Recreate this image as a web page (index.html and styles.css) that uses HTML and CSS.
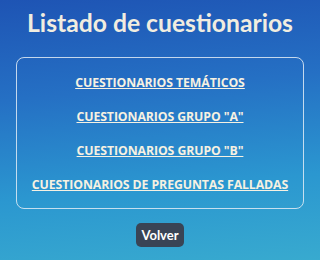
FILE: index.html
```html
<!DOCTYPE html>
<html lang="es">
<head>
<meta charset="utf-8">
<title>Listado de cuestionarios</title>
<link rel="stylesheet" href="styles.css">
</head>
<body>
<main class="page">
  <h1 class="title">Listado de cuestionarios</h1>
  <nav class="card">
    <a class="link" href="#">CUESTIONARIOS TEMÁTICOS</a>
    <a class="link" href="#">CUESTIONARIOS GRUPO "A"</a>
    <a class="link" href="#">CUESTIONARIOS GRUPO "B"</a>
    <a class="link" href="#">CUESTIONARIOS DE PREGUNTAS FALLADAS</a>
  </nav>
  <button class="back" type="button">Volver</button>
</main>
</body>
</html>
```

FILE: styles.css
```css
html, body {
  margin: 0;
  height: 100%;
}
body {
  background: linear-gradient(175deg, #1e54b4 0%, #2570c4 35%, #2b97d0 70%, #38aacf 100%);
  font-family: "Open Sans", "Noto Sans", sans-serif;
  color: #f3efe2;
}
.page {
  display: flex;
  flex-direction: column;
  align-items: center;
  padding-top: 8px;
}
.title {
  margin: 0;
  font-family: Lato, "Open Sans", sans-serif;
  font-size: 24.7px;
  font-weight: 700;
  line-height: 30px;
  color: #f1ede0;
}
.card {
  box-sizing: border-box;
  width: 288px;
  margin-top: 19px;
  height: 152px;
  border: 1.5px solid rgba(225, 235, 245, 0.85);
  border-radius: 8px;
  display: flex;
  flex-direction: column;
  align-items: center;
  padding-top: 17px;
  gap: 18px;
}
.link {
  font-size: 12.3px;
  font-weight: 700;
  line-height: 16px;
  color: #f6f1e2;
  text-decoration: underline;
  text-underline-offset: 1px;
  letter-spacing: -0.1px;
}
.back {
  margin-top: 14px;
  height: 24px;
  padding: 0 5px;
  border: none;
  border-radius: 5px;
  background: #394455;
  color: #ffffff;
  font-family: Lato, "Open Sans", sans-serif;
  font-size: 13px;
  font-weight: 700;
}
```
